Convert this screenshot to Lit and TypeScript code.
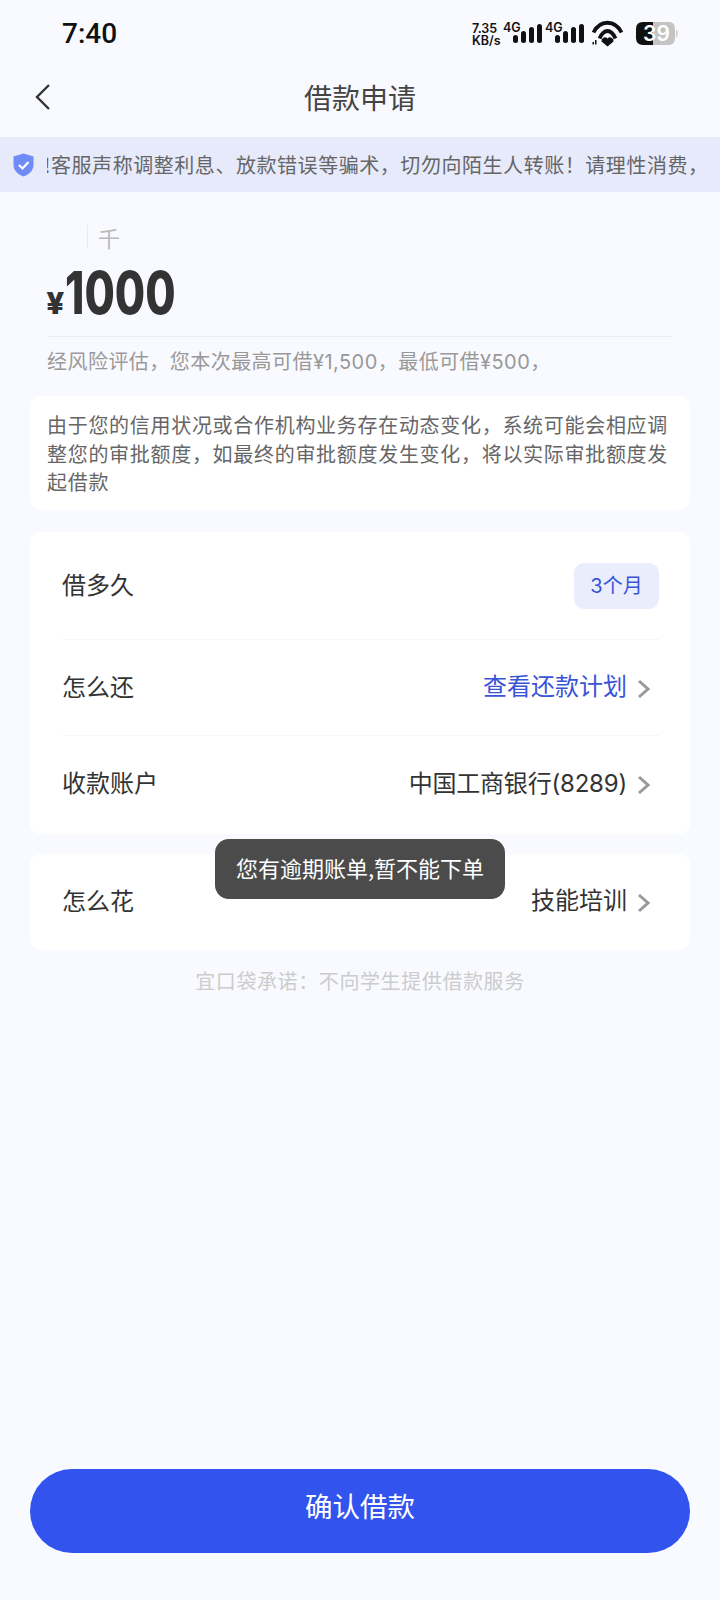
import { LitElement, html, css, svg } from "lit";
import { customElement } from "lit/decorators.js";

const chevron = html`<svg class="chev" width="14" height="20" viewBox="0 0 14 20"><path d="M2 2 L11 10 L2 18" fill="none" stroke="#999" stroke-width="3"/></svg>`;

@customElement("app-root")
export class AppRoot extends LitElement {
  static styles = css`
    :host { display: flex; flex-direction: column; width: 720px; height: 1600px; position: relative; overflow: hidden; background: #f9faff; font-family: "Noto Sans CJK SC", "Noto Sans", sans-serif; color: #333; }
    .status { height: 68px; display: flex; align-items: center; justify-content: space-between; padding: 0 40px 0 62px; flex: none; box-sizing: border-box; }
    .time { font-family: Roboto, sans-serif; font-size: 28px; font-weight: 500; color: #111; line-height: 1; }
    .icons { display: block; }
    .nav { height: 69px; display: flex; align-items: center; justify-content: center; position: relative; flex: none; padding-bottom: 12px; box-sizing: border-box; }
    .nav .title { font-size: 28px; color: #444; line-height: 1; }
    .back { position: absolute; left: 34px; top: 15px; }
    .banner { height: 55px; flex: none; background: #e6eafb; display: flex; align-items: center; padding-left: 13px; overflow: hidden; box-sizing: border-box; }
    .banner svg { flex: none; }
    .banner .mq { margin-left: 13px; width: 660px; overflow: hidden; white-space: nowrap; font-size: 20px; letter-spacing: 0.55px; color: #666; line-height: 1.2; flex: none; }
    .mq span { display: block; margin-left: -3px; }
    .amount { padding: 33px 47px 0; flex: none; }
    .unit { display: flex; align-items: center; height: 24px; padding-left: 40px; }
    .unit i { display: block; width: 1px; height: 24px; background: #eaeaea; margin-right: 10px; }
    .unit span { font-size: 22px; color: #bbb; line-height: 1; }
    .value { display: flex; align-items: baseline; height: 65px; margin-top: 11px; line-height: 65px; color: #333; }
    .value .yen { font-family: Roboto, sans-serif; font-weight: 900; font-size: 31px; width: 18px; transform: scaleX(1.05); }
    .value .num { font-family: Inter, Roboto, sans-serif; font-weight: 800; font-size: 59px; display: inline-block; transform: scaleX(.745); transform-origin: left center; }
    .rule { height: 1px; background: #eceef4; margin-top: 11px; width: 626px; }
    .sub { font-family: Inter, "Noto Sans CJK SC", sans-serif; font-size: 20px; letter-spacing: .46px; color: #999; margin-top: 11px; line-height: 28px; }
    .notice { margin: 20px 30px 0; height: 114px; box-sizing: border-box; background: #fff; border-radius: 10px; padding: 15px 17px 0; font-size: 20px; letter-spacing: .7px; line-height: 28.6px; color: #666; flex: none; }
    .card { margin: 22px 30px 0; background: #fff; border-radius: 10px; flex: none; padding: 0 31px 0 32px; }
    .c2 { height: 302px; box-sizing: border-box; }
    .c3 { margin-top: 20px; }
    .row { display: flex; align-items: center; justify-content: space-between; font-size: 24px; color: #333; line-height: 1; border-bottom: 1px solid #f5f6f8; box-sizing: border-box; }
    .row:last-child { border-bottom: 0; }
    .row > span:first-child { margin-bottom: 4px; }
    .r1 { height: 108px; }
    .r2 { height: 96px; }
    .r3 { height: 96px; }
    .r4 { height: 96px; }
    .val { display: flex; align-items: center; gap: 10px; padding-right: 8px; font-family: Inter, "Noto Sans CJK SC", sans-serif; }
    .val b { font-weight: 400; margin-bottom: 2px; }
    .val b.acct { letter-spacing: -.2px; margin-bottom: 0; }
    .chev { margin-top: 2px; }
    .blue { color: #3a54d8; }
    .tag { width: 85px; height: 46px; border-radius: 10px; background: #e9edfc; color: #3a54d8; font-family: Inter, "Noto Sans CJK SC", sans-serif; font-size: 20px; display: flex; align-items: center; justify-content: center; }
    .promise { margin-top: 19px; text-align: center; font-size: 20px; letter-spacing: .6px; color: #ccc; line-height: 24px; flex: none; }
    .btn { margin: auto 30px 47px; height: 84px; border-radius: 42px; background: #3353ee; color: #fff; font-size: 27.5px; display: flex; align-items: center; justify-content: center; flex: none; padding-bottom: 12px; box-sizing: border-box; }
    .toast { position: absolute; left: 215px; top: 839px; width: 290px; height: 60px; border-radius: 14px; background: #4b4b4b; color: #fff; font-size: 22px; display: flex; align-items: center; justify-content: center; white-space: nowrap; padding-bottom: 5px; box-sizing: border-box; }
    .sig { font-family: Inter, Roboto, sans-serif; font-weight: 600; fill: #111; }
  `;

  private bars(x: number) {
    return svg`
      <text class="sig" x="${x - 10}" y="32" font-size="12.5">4G</text>
      <rect x="${x}" y="35" width="5" height="8" rx="2.5" fill="#111"/>
      <rect x="${x + 8}" y="31" width="5" height="12" rx="2.5" fill="#111"/>
      <rect x="${x + 16}" y="27" width="5" height="16" rx="2.5" fill="#111"/>
      <rect x="${x + 24}" y="24" width="5" height="19" rx="2.5" fill="#111"/>`;
  }

  render() {
    return html`
      <div class="status">
        <span class="time">7:40</span>
        <svg class="icons" width="210" height="30" viewBox="470 19 210 30">
          <text class="sig" x="472" y="33" font-size="12.5">7.35</text>
          <text class="sig" x="472" y="45" font-size="12.5">KB/s</text>
          ${this.bars(513)}
          ${this.bars(555)}
          <path d="M593.500 32.500 C600 19.500 615 19.500 621.500 32.500" fill="none" stroke="#111" stroke-width="3.800"/>
          <path d="M599.500 38.500 C604 28.500 611 28.500 615.500 38.500" fill="none" stroke="#111" stroke-width="3.800"/>
          <path d="M607.500 46.500 L601.500 41.500 A3.500 3.500 0 0 1 607.500 38.500 A3.500 3.500 0 0 1 613.500 41.500 Z" fill="#111"/>
          <rect x="592.500" y="42" width="1.500" height="2.500" fill="#111"/><rect x="595" y="40" width="1.500" height="4.500" fill="#111"/>
          <path d="M653 22 H643 Q636 22 636 29 V38 Q636 45 643 45 H653 Z" fill="#111"/>
          <path d="M653 22 H669 Q675 22 675 29 V38 Q675 45 669 45 H653 Z" fill="#c4c4c4"/>
          <rect x="676" y="30" width="1.500" height="7" rx=".7" fill="#ccc"/>
          <text x="656.500" y="41" font-size="21" font-weight="600" font-family="Inter, Roboto, sans-serif" fill="#fff" text-anchor="middle">39</text>
        </svg>
      </div>
      <div class="nav">
        <svg class="back" width="18" height="28" viewBox="0 0 18 28"><path d="M15 2 L3 14 L15 26" fill="none" stroke="#333" stroke-width="2.4"/></svg>
        <span class="title">借款申请</span>
      </div>
      <div class="banner">
        <svg width="21" height="24" viewBox="0 0 21 24"><path d="M10.500 0.500 L20.500 3.500 V12 C20.500 18 15 22 10.500 23.500 C6 22 0.500 18 0.500 12 V3.500 Z" fill="#6f8bf5"/><path d="M6 12 L9.500 15.500 L15.500 9" fill="none" stroke="#fff" stroke-width="2.200"/></svg>
        <div class="mq"><span>!客服声称调整利息、放款错误等骗术&#xFF0C;切勿向陌生人转账&#xFF01;请理性消费&#xFF0C;</span></div>
      </div>
      <div class="amount">
        <div class="unit"><i></i><span>千</span></div>
        <div class="value"><span class="yen">¥</span><span class="num">1000</span></div>
        <div class="rule"></div>
        <div class="sub">经风险评估&#xFF0C;您本次最高可借¥1,500&#xFF0C;最低可借¥500&#xFF0C;</div>
      </div>
      <div class="notice">由于您的信用状况或合作机构业务存在动态变化&#xFF0C;系统可能会相应调整您的审批额度&#xFF0C;如最终的审批额度发生变化&#xFF0C;将以实际审批额度发起借款</div>
      <div class="card c2">
        <div class="row r1"><span>借多久</span><span class="tag">3个月</span></div>
        <div class="row r2"><span>怎么还</span><span class="val blue"><b>查看还款计划</b>${chevron}</span></div>
        <div class="row r3"><span>收款账户</span><span class="val"><b class="acct">中国工商银行(8289)</b>${chevron}</span></div>
      </div>
      <div class="card c3">
        <div class="row r4"><span>怎么花</span><span class="val"><b>技能培训</b>${chevron}</span></div>
      </div>
      <div class="promise">宜口袋承诺&#xFF1A;不向学生提供借款服务</div>
      <div class="btn">确认借款</div>
      <div class="toast">您有逾期账单,暂不能下单</div>
    `;
  }
}
